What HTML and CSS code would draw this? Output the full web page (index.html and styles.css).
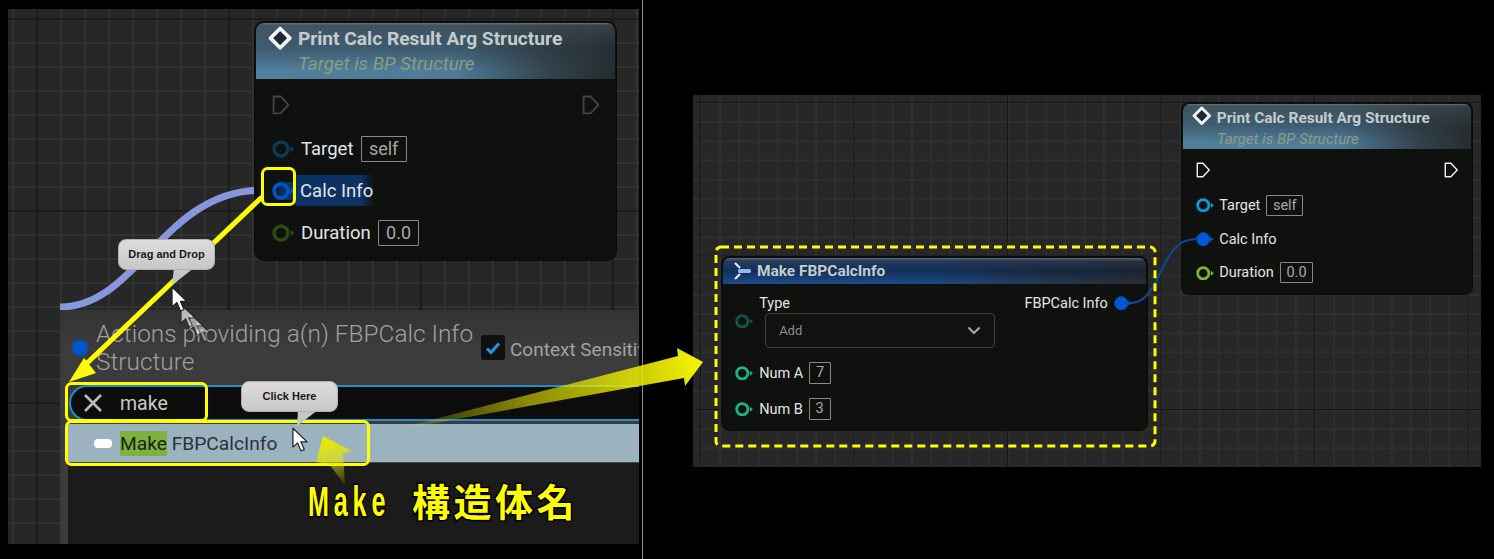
FILE: index.html
```html
<!DOCTYPE html>
<html lang="en">
<head>
  <meta charset="UTF-8">
  <title>Make FBPCalcInfo</title>
  <link rel="stylesheet" href="styles.css">
</head>
<body>

<svg class="defs" width="0" height="0">
  <symbol id="pin-ring" viewBox="0 0 20 16"><circle cx="8" cy="8" r="6.2" fill="none" stroke="currentColor" stroke-width="3"/><path d="M16.5 5.2L20 8L16.5 10.8Z" fill="currentColor"/></symbol>
  <symbol id="pin-solid" viewBox="0 0 20 16"><circle cx="8" cy="8" r="7.6" fill="currentColor"/><path d="M15.6 5.6L20 8L15.6 10.4Z" fill="currentColor"/></symbol>
  <symbol id="exec" viewBox="0 0 18 20"><path d="M1.5 1.5H8.5L16.5 10L8.5 18.5H1.5Z" fill="none" stroke="currentColor" stroke-width="1.8" stroke-linejoin="round"/></symbol>
  <symbol id="func" viewBox="0 0 24 24"><path d="M12 2.5L21.5 12L12 21.5L2.5 12Z" fill="#1d2a33" stroke="#f2f4f5" stroke-width="3.6" stroke-linejoin="round"/></symbol>
  <symbol id="cursor" viewBox="0 0 18 28"><path d="M1 1V21L6 16.5L9.5 25L13 23.5L9.5 15.5H16Z" fill="#fff" stroke="#222" stroke-width="1.3" stroke-linejoin="round"/></symbol>
</svg>

<!-- left shot: dragging off the pin -->
<div class="shot shot-left">
  <svg class="wire-layer" width="631" height="535">
    <path class="wire-fat" d="M52 298C130 298 155 181 254 181"/>
  </svg>

  <div class="node node-print node-big">
    <div class="node-head head-print">
      <svg class="head-icon"><use href="#func"/></svg>
      <div>
        <div class="node-title">Print Calc Result Arg Structure</div>
        <div class="node-sub">Target is BP Structure</div>
      </div>
    </div>
    <div class="node-row row-exec dim">
      <svg class="exec-pin"><use href="#exec"/></svg>
      <svg class="exec-pin"><use href="#exec"/></svg>
    </div>
    <div class="node-row">
      <svg class="pin c-blue-dim"><use href="#pin-ring"/></svg>
      <span class="pin-label">Target</span><span class="val">self</span>
    </div>
    <div class="node-row">
      <svg class="pin picked-pin c-royal"><use href="#pin-ring"/></svg>
      <span class="pin-label picked">Calc Info</span>
    </div>
    <div class="node-row">
      <svg class="pin c-green-dim"><use href="#pin-ring"/></svg>
      <span class="pin-label">Duration</span><span class="val">0.0</span>
    </div>
  </div>

  <div class="popup">
    <div class="popup-head">
      <span class="dot"></span>
      <div class="popup-title">Actions providing a(n) FBPCalc Info Structure</div>
      <span class="check">
        <svg width="16" height="14" viewBox="0 0 16 14"><path d="M2 7.5L6 11.5L14 2.5" fill="none" stroke="#1d9bd8" stroke-width="3"/></svg>
      </span>
      <span class="check-label">Context Sensitive</span>
    </div>
    <div class="search">
      <svg class="search-x" width="20" height="18" viewBox="0 0 20 18"><path d="M2 1L18 17M18 1L2 17" stroke="#b9b9b9" stroke-width="2.6"/></svg>
      <span>make</span>
    </div>
    <div class="result">
      <span class="result-pill"></span>
      <span class="result-text"><mark>Make</mark> FBPCalcInfo</span>
    </div>
    <div class="popup-rest"></div>
  </div>
</div>

<div class="divider"></div>

<!-- right shot: the node that got placed -->
<div class="shot shot-right">
  <div class="node node-make">
    <div class="node-head head-make">
      <svg class="make-icon" width="18" height="20" viewBox="0 0 18 20">
        <path d="M1 2L6 7M1 18L6 13" stroke="#eef" stroke-width="2"/>
        <rect x="4" y="8" width="13" height="4" rx="1.5" fill="#8fb8ee"/>
      </svg>
      <div class="node-title">Make FBPCalcInfo</div>
    </div>
    <div class="make-body">
      <div class="make-inputs">
        <div class="type-row">
          <svg class="pin c-teal-dim"><use href="#pin-ring"/></svg>
          <div class="type-col">
            <span class="pin-label">Type</span>
            <div class="select">
              <span>Add</span>
              <svg width="14" height="9" viewBox="0 0 14 9"><path d="M1.5 1.5L7 7L12.5 1.5" fill="none" stroke="#aaa" stroke-width="2"/></svg>
            </div>
          </div>
        </div>
        <div class="make-row">
          <svg class="pin c-teal"><use href="#pin-ring"/></svg>
          <span class="pin-label">Num A</span><span class="val val-num">7</span>
        </div>
        <div class="make-row">
          <svg class="pin c-teal"><use href="#pin-ring"/></svg>
          <span class="pin-label">Num B</span><span class="val val-num">3</span>
        </div>
      </div>
      <div class="make-output">
        <span class="pin-label">FBPCalc Info</span>
        <svg class="pin c-royal"><use href="#pin-solid"/></svg>
      </div>
    </div>
  </div>

  <div class="node node-print node-small">
    <div class="node-head head-print">
      <svg class="head-icon"><use href="#func"/></svg>
      <div>
        <div class="node-title">Print Calc Result Arg Structure</div>
        <div class="node-sub">Target is BP Structure</div>
      </div>
    </div>
    <div class="node-row row-exec">
      <svg class="exec-pin"><use href="#exec"/></svg>
      <svg class="exec-pin"><use href="#exec"/></svg>
    </div>
    <div class="node-row">
      <svg class="pin c-sky"><use href="#pin-ring"/></svg>
      <span class="pin-label">Target</span><span class="val">self</span>
    </div>
    <div class="node-row">
      <svg class="pin c-royal"><use href="#pin-solid"/></svg>
      <span class="pin-label">Calc Info</span>
    </div>
    <div class="node-row">
      <svg class="pin c-green"><use href="#pin-ring"/></svg>
      <span class="pin-label">Duration</span><span class="val">0.0</span>
    </div>
  </div>

  <!-- wire runs over both nodes -->
  <svg class="wire-layer" width="788" height="372">
    <path class="wire-thin" d="M437 208C470 208 465 144 503 144"/>
  </svg>
</div>

<!-- annotations drawn on top of the screenshots -->
<svg class="marks" width="1494" height="559">
  <defs>
    <linearGradient id="fade-long" gradientUnits="userSpaceOnUse" x1="385" y1="432" x2="703" y2="362">
      <stop offset="0" stop-color="#f4f400" stop-opacity="0"/>
      <stop offset=".45" stop-color="#e0e000" stop-opacity=".6"/>
      <stop offset="1" stop-color="#f6f600"/>
    </linearGradient>
    <linearGradient id="fade-short" gradientUnits="userSpaceOnUse" x1="328" y1="440" x2="345" y2="485">
      <stop offset="0" stop-color="#e8e800"/>
      <stop offset="1" stop-color="#e8e800" stop-opacity=".1"/>
    </linearGradient>
  </defs>
  <rect class="mark-box" x="262.5" y="168.5" width="32" height="36" rx="5"/>
  <rect class="mark-box" x="66.5" y="383.5" width="140" height="37" rx="5"/>
  <rect class="mark-box" x="66.5" y="421.5" width="302" height="43" rx="5"/>
  <rect class="mark-dash" x="716" y="247" width="439" height="199" rx="5"/>
  <path class="mark-line" d="M262 197L84 366"/>
  <path class="mark-fill" d="M69 382L84 358L96 373Z"/>
  <path d="M385 432L678 356L677 348L703 362L685 386L684 378Z" fill="url(#fade-long)"/>
  <path d="M323 436L352 451L343 454L345 485L329 464L316 462Z" fill="url(#fade-short)"/>
  <path class="tail" d="M174 268L172 285L194 268Z"/>
  <path class="tail" d="M298 410L297 426L318 410Z"/>
  <use href="#cursor" x="195" y="318" width="17" height="27" opacity=".45"/>
  <use href="#cursor" x="188" y="311" width="17" height="27" opacity=".55"/>
  <use href="#cursor" x="180" y="303" width="17" height="27" opacity=".65"/>
  <use href="#cursor" x="171" y="286" width="18" height="28"/>
  <use href="#cursor" x="292" y="427" width="17" height="27"/>
</svg>

<div class="callout callout-drag">Drag and Drop</div>
<div class="callout callout-click">Click Here</div>
<div class="big-note"><span class="big-latin">Make</span><span class="big-cjk">構造体名</span></div>

</body>
</html>
```

FILE: styles.css
```css
body {
  position: relative;
  margin: 0;
  width: 1494px;
  height: 559px;
  overflow: hidden;
  display: flex;
  align-items: flex-start;
  background-color: #000;
  font-family: Roboto, "Liberation Sans", sans-serif;
}
.defs {
  position: absolute;
}

/* graph panels */
.shot {
  position: relative;
  flex: none;
  overflow: hidden;
  background-color: #272727;
}
.shot-left {
  width: 631px;
  height: 535px;
  margin: 9px 0 0 8px;
  background-image:
    linear-gradient(90deg, #1c1c1c 2px, transparent 2px),
    linear-gradient(#1c1c1c 2px, transparent 2px),
    linear-gradient(90deg, #323232 2px, transparent 2px),
    linear-gradient(#323232 2px, transparent 2px);
  background-size: 192px 192px, 192px 192px, 24px 24px, 24px 24px;
  background-position: 28px 0, 0 9px, 4px 0, 0 9px;
}
.shot-right {
  width: 788px;
  height: 372px;
  margin: 95px 0 0 50px;
  background-image:
    linear-gradient(90deg, #171717 1px, transparent 1px),
    linear-gradient(#171717 1px, transparent 1px),
    linear-gradient(90deg, #2f2f2f 1.5px, transparent 1.5px),
    linear-gradient(#2f2f2f 1.5px, transparent 1.5px);
  background-size: 153.5px 153.5px, 153.5px 153.5px, 19.2px 19.2px, 19.2px 19.2px;
  background-position: 7px 0, 0 7px, 7px 0, 0 7px;
}
.divider {
  flex: none;
  width: 1px;
  height: 559px;
  margin-left: 3px;
  background-color: #8a8a8a;
}
.wire-layer {
  position: absolute;
  left: 0;
  top: 0;
}
.wire-fat {
  fill: none;
  stroke: #8897dc;
  stroke-width: 7;
}
.wire-thin {
  fill: none;
  stroke: #0b4a9c;
  stroke-width: 2;
}

/* blueprint nodes */
.node {
  position: absolute;
  box-sizing: border-box;
  padding: 1px;
  border-radius: .5em;
  background-color: #0f110f;
  box-shadow: 0 0 0 1px #0a0a0a;
  color: #e4e4e4;
}
.node-big {
  left: 247px;
  top: 13px;
  width: 361px;
  height: 238px;
  font-size: 18px;
}
.node-small {
  left: 489px;
  top: 8px;
  width: 290px;
  height: 191px;
  font-size: 14.5px;
}
.node-make {
  left: 29px;
  top: 162px;
  width: 425px;
  height: 173px;
  font-size: 14.5px;
}
.node-head {
  display: flex;
  align-items: flex-start;
  border-radius: .45em .45em 0 0;
}
.head-print {
  height: 3.13em;
  background-image:
    linear-gradient(#6f7476 0, rgba(60, 70, 76, .75) 4%, rgba(40, 50, 58, .45) 45%, rgba(40, 50, 58, 0) 85%),
    linear-gradient(90deg, #517f9c 0, #4f7b98 55%, #33434d 82%, #262b2e 100%);
}
.head-make {
  align-items: center;
  height: 26px;
  background-image:
    linear-gradient(#5a6577 0, rgba(40, 50, 70, .7) 12%, rgba(10, 25, 50, .55) 50%, rgba(10, 25, 50, 0) 100%),
    linear-gradient(90deg, #1c4c8c 0, #1d4a86 50%, #27384f 78%, #2c2f33 100%);
}
.head-icon {
  flex: none;
  width: 1.35em;
  height: 1.35em;
  margin: .17em .33em 0 .65em;
}
.make-icon {
  margin: 0 5px 0 11px;
}
.node-title {
  margin-top: .19em;
  font-size: 1.065em;
  font-weight: 700;
  line-height: 1.3em;
  white-space: nowrap;
  color: #c4ccce;
}
.node-small .node-title {
  margin-top: .28em;
}
.head-make .node-title {
  margin-top: 0;
}
.node-sub {
  margin-top: .1em;
  font-style: italic;
  font-size: 1.045em;
  line-height: 1.25em;
  color: #8c9c86;
}
.node-row {
  display: flex;
  align-items: center;
  height: 2.33em;
  padding-left: .9em;
}
.row-exec {
  box-sizing: border-box;
  justify-content: space-between;
  height: 2.7em;
  padding-top: .15em;
  padding-right: .85em;
  color: #eee;
}
.row-exec.dim {
  color: #454745;
}
.exec-pin {
  width: 1em;
  height: 1.1em;
}
.pin {
  flex: none;
  width: 1.25em;
  height: 1em;
  margin-right: .35em;
}
.pin-label {
  white-space: nowrap;
}
.node-big .pin-label {
  font-size: 1.03em;
}
.picked {
  padding: .25em .05em .25em .3em;
  margin-left: -.35em;
  background: linear-gradient(90deg, #0b3263 85%, rgba(11, 50, 99, 0));
}
.picked-pin {
  background: linear-gradient(90deg, rgba(11, 50, 99, 0), #0b3263 50%);
}
.val {
  box-sizing: border-box;
  height: 1.45em;
  margin-left: .4em;
  padding: 0 .4em;
  border: 1px solid #8a8a8a;
  border-radius: 1px;
  line-height: 1.35em;
  color: #a8a8a8;
}
.val-num {
  min-width: 22px;
  text-align: center;
}
.c-blue-dim { color: #0e3a55; }
.c-royal { color: #0057cf; }
.c-green-dim { color: #2b4a14; }
.c-sky { color: #0a9ce0; }
.c-green { color: #78b82a; }
.c-teal { color: #19b48c; }
.c-teal-dim { color: #0c5a4c; }

/* make node body */
.make-body {
  display: flex;
  justify-content: space-between;
  padding: 9px 12px 0 12px;
}
.make-inputs {
  display: flex;
  flex-direction: column;
}
.type-row {
  display: flex;
  align-items: center;
  height: 62px;
}
.type-row .pin {
  margin-top: -6px;
  margin-right: 6px;
}
.type-col {
  display: flex;
  flex-direction: column;
  align-items: flex-start;
  margin-top: -6px;
}
.select {
  box-sizing: border-box;
  display: flex;
  align-items: center;
  justify-content: space-between;
  width: 230px;
  height: 35px;
  margin: 1px 0 0 6px;
  padding: 0 13px;
  border: 1px solid #3c3f3c;
  border-radius: 4px;
  background-color: #111;
  font-size: 13px;
  color: #8c8c8c;
}
.make-row {
  display: flex;
  align-items: center;
  height: 36px;
}
.make-row .pin {
  margin-right: 6px;
}
.make-output {
  display: flex;
  align-items: center;
  height: 20px;
}
.make-output .pin {
  margin: 0 2px 0 6px;
}

/* action menu */
.popup {
  position: absolute;
  left: 52px;
  top: 301px;
  width: 579px;
  height: 235px;
  display: flex;
  flex-direction: column;
  overflow: hidden;
  background: linear-gradient(#333 0, #3c3c3c 40px);
  white-space: nowrap;
}
.popup-head {
  display: flex;
  align-items: center;
  flex: none;
  height: 75px;
  padding-left: 12px;
}
.dot {
  flex: none;
  width: 16px;
  height: 16px;
  border-radius: 50%;
  background-color: #0056c8;
}
.popup-title {
  flex: none;
  width: 385px;
  margin-left: 8px;
  white-space: normal;
  font-size: 24.4px;
  line-height: 28px;
  font-weight: 300;
  color: #a0a0a0;
}
.check {
  flex: none;
  display: flex;
  align-items: center;
  justify-content: center;
  width: 24px;
  height: 25px;
  border-radius: 3px;
  background-color: #101010;
}
.check-label {
  margin: 3px 0 0 5px;
  font-size: 19px;
  color: #a2a2a2;
}
.search {
  box-sizing: border-box;
  display: flex;
  align-items: center;
  flex: none;
  height: 36px;
  margin-left: 9px;
  padding-left: 12px;
  border: solid #1f8fc8;
  border-width: 2px 0 2px 2px;
  border-radius: 18px 0 0 18px;
  background-color: #0c0c0c;
  font-size: 19.5px;
  color: #cacaca;
}
.search-x {
  margin-right: 17px;
}
.result {
  display: flex;
  align-items: center;
  flex: none;
  height: 38px;
  margin: 3px 0 0 8px;
  border-bottom: 1px solid #44494c;
  background-color: #9bb2bf;
  font-size: 19.2px;
  color: #2b3338;
}
.result-pill {
  width: 18px;
  height: 9px;
  margin: 0 8px 0 26px;
  border-radius: 4px;
  background-color: #fff;
}
.result-text mark {
  padding: 1px 0;
  background-color: #7eb13f;
  color: #182414;
}
.popup-rest {
  flex: 1;
  margin-left: 8px;
  background-color: #1b1b1b;
}

/* annotations */
.marks {
  position: absolute;
  left: 0;
  top: 0;
}
.mark-box {
  fill: none;
  stroke: #ff0;
  stroke-width: 3;
}
.mark-dash {
  fill: none;
  stroke: #ff0;
  stroke-width: 3;
  stroke-dasharray: 8 5;
}
.mark-line {
  fill: none;
  stroke: #ff0;
  stroke-width: 5;
}
.mark-fill {
  fill: #ff0;
}
.tail {
  fill: #c4c4c4;
}
.callout {
  position: absolute;
  box-sizing: border-box;
  width: 97px;
  height: 31px;
  border-radius: 8px;
  border: 1px solid #b0b0b0;
  background: linear-gradient(#dcdcdc, #c8c8c8);
  font: 700 11px/29px "Liberation Sans", sans-serif;
  text-align: center;
  color: #1a1a1a;
}
.callout-drag {
  left: 118px;
  top: 239px;
}
.callout-click {
  left: 241px;
  top: 381px;
}
.big-note {
  position: absolute;
  left: 308px;
  top: 480px;
  display: flex;
  align-items: center;
  height: 44px;
  color: #ff0;
  font-weight: 700;
  white-space: nowrap;
  -webkit-text-stroke: 3px #000;
  paint-order: stroke fill;
}
.big-latin {
  width: 104px;
  font: 700 42px/44px "Liberation Sans", sans-serif;
  letter-spacing: 8px;
  transform: scaleX(.6);
  transform-origin: left center;
}
.big-cjk {
  margin-top: -5px;
  font: 700 38px/44px "Noto Sans CJK JP", sans-serif;
  letter-spacing: 3.5px;
}
```
